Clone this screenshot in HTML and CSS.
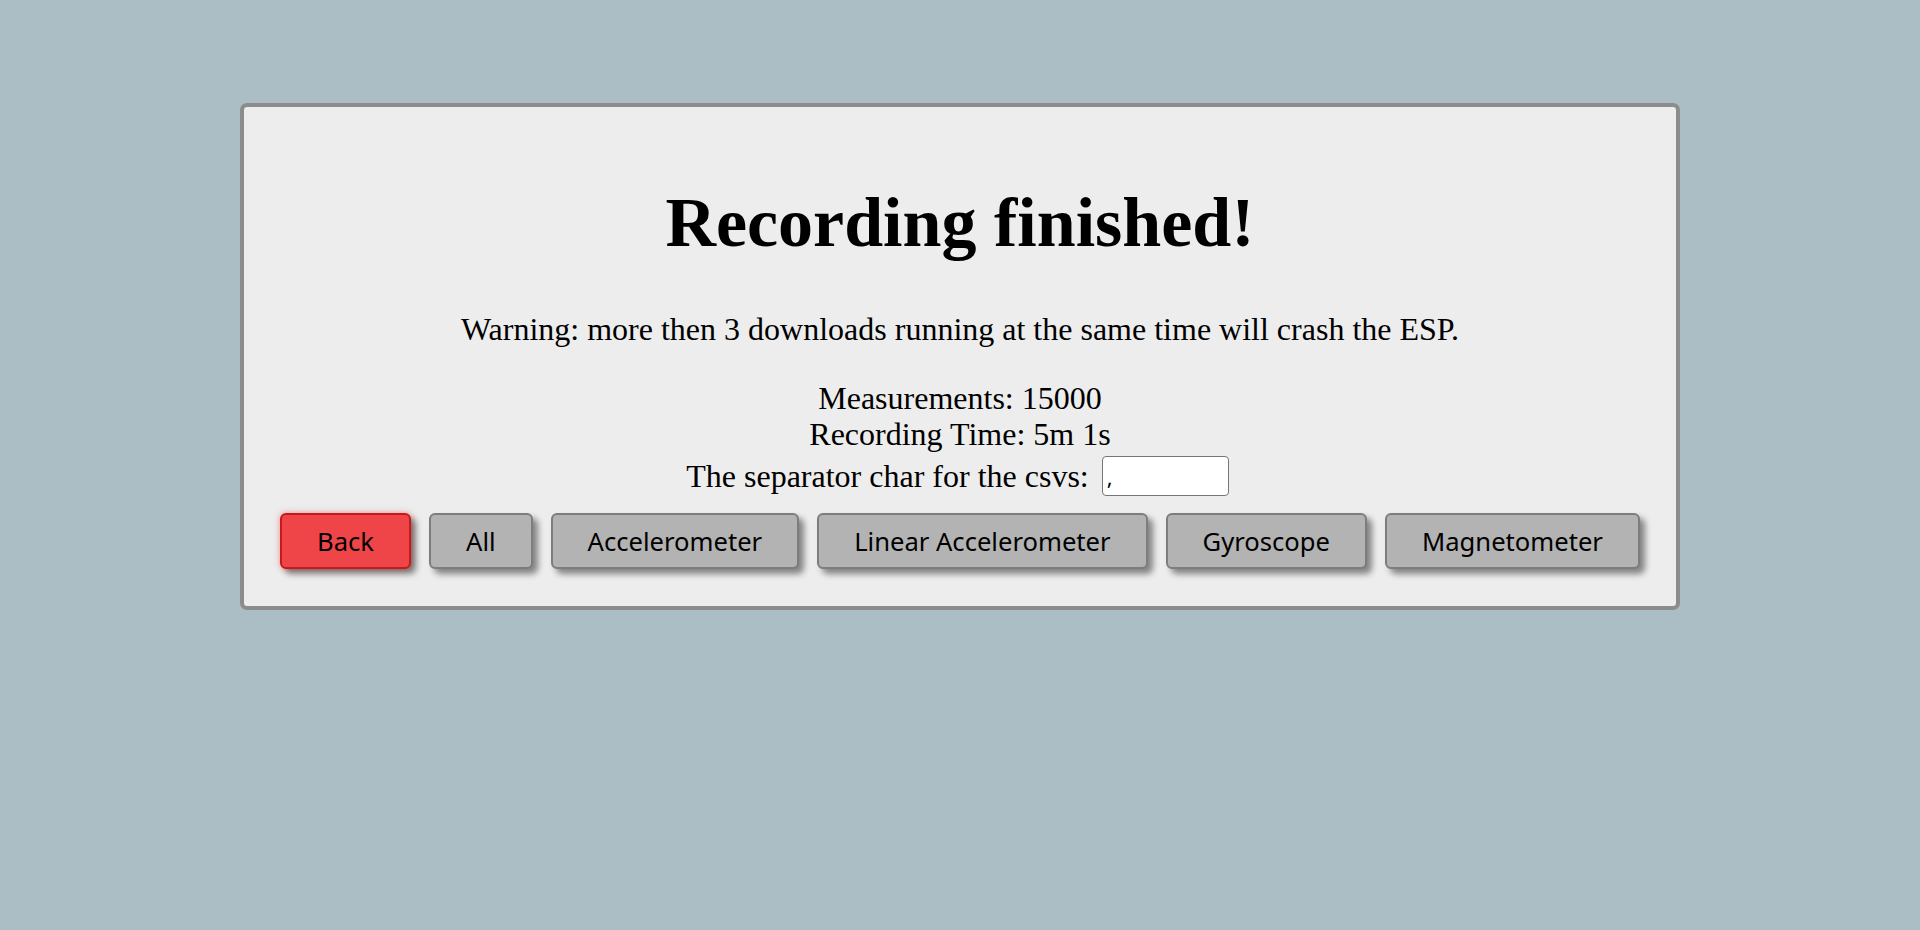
FILE: index.html
```html
<!DOCTYPE html>
<html>
<head>
<meta charset="utf-8">
<link rel="stylesheet" href="styles.css">
</head>
<body>
<div class="card">
  <h1 class="title">Recording finished!</h1>
  <p class="warning">Warning: more then 3 downloads running at the same time will crash the ESP.</p>
  <div class="stats">
    <div class="stat">Measurements: 15000</div>
    <div class="stat">Recording Time: 5m 1s</div>
    <div class="sep-row">
      <label class="sep-label" for="sep">The separator char for the csvs:</label>
      <input class="sep-input" id="sep" type="text" value=",">
    </div>
  </div>
  <div class="buttons">
    <button class="btn btn-back">Back</button>
    <button class="btn">All</button>
    <button class="btn">Accelerometer</button>
    <button class="btn">Linear Accelerometer</button>
    <button class="btn">Gyroscope</button>
    <button class="btn">Magnetometer</button>
  </div>
</div>
</body>
</html>
```

FILE: styles.css
```css
html, body {
  margin: 0;
  padding: 0;
}
body {
  background: #abbec5;
  font-family: "Liberation Serif", "Times New Roman", serif;
  color: #000;
  padding-top: 103px;
}
.card {
  box-sizing: border-box;
  width: 1440px;
  margin: 0 auto;
  background: #ededed;
  border: 4px solid #8c8c8c;
  border-radius: 7px;
  padding: 76px 36px 37px;
  text-align: center;
}
.title {
  margin: 0;
  font-size: 70px;
  font-weight: bold;
  line-height: 80px;
}
.warning {
  margin: 48px 0 0;
  font-size: 32px;
  line-height: 37px;
}
.stats {
  margin-top: 32px;
  font-size: 32px;
  line-height: 36px;
}
.sep-row {
  margin-top: 4px;
  padding-right: 5px;
  display: flex;
  justify-content: center;
  align-items: center;
  gap: 13px;
}
.sep-input {
  box-sizing: border-box;
  width: 127px;
  height: 40px;
  border: 1.5px solid #767676;
  border-radius: 4px;
  background: #fff;
  font-family: "Noto Sans", sans-serif;
  font-size: 22px;
  padding: 0 4px;
  color: #000;
}
.buttons {
  margin-top: 17px;
  display: flex;
  justify-content: center;
  gap: 18px;
}
.btn {
  box-sizing: border-box;
  flex-shrink: 0;
  white-space: nowrap;
  height: 56px;
  padding: 0 35px;
  font-family: "Noto Sans", sans-serif;
  font-size: 25.6px;
  color: #000;
  background: #b3b3b3;
  border: 2px solid #7d7d7d;
  border-radius: 6px;
  box-shadow: 5px 5px 6px rgba(0, 0, 0, 0.45);
}
.btn-back {
  background: #f04548;
  border-color: #c41a1c;
  box-shadow: 5px 5px 6px rgba(0, 0, 0, 0.45), 0 0 6px rgba(240, 60, 60, 0.5);
}
```
